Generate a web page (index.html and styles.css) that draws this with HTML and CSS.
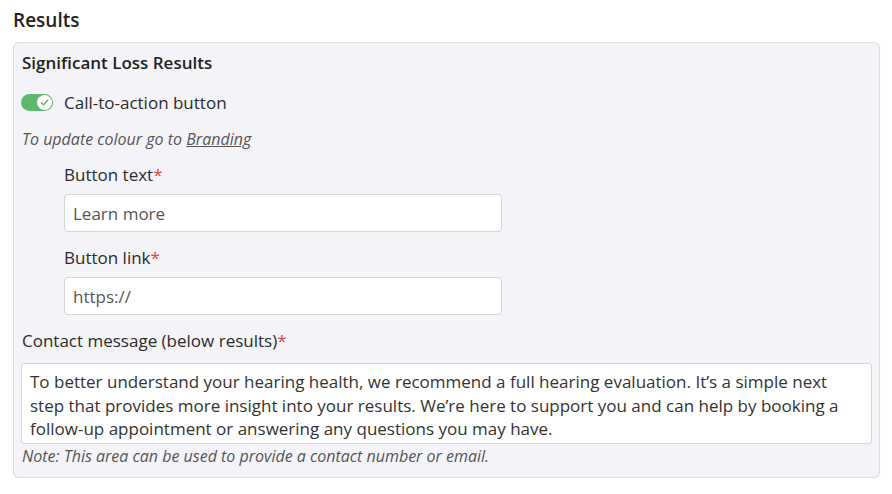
FILE: index.html
```html
<!DOCTYPE html>
<html lang="en">
<head>
<meta charset="utf-8">
<title>Results</title>
<link rel="stylesheet" href="styles.css">
</head>
<body>
<h2 class="section-title">Results</h2>
<div class="panel">
  <h3 class="panel-title">Significant Loss Results</h3>
  <div class="toggle-row">
    <span class="toggle">
      <span class="knob">
        <svg width="11" height="11" viewBox="0 0 12 12"><path d="M2.6 6.3 L5 8.6 L9.4 3.6" fill="none" stroke="#5cb96b" stroke-width="1.6" stroke-linecap="round" stroke-linejoin="round"/></svg>
      </span>
    </span>
    <span class="toggle-label">Call-to-action button</span>
  </div>
  <p class="hint">To update colour go to <a href="#" class="hint-link">Branding</a></p>
  <div class="sub-fields">
    <label class="field-label">Button text<span class="req">*</span></label>
    <input class="text-input" type="text" value="Learn more">
    <label class="field-label second">Button link<span class="req">*</span></label>
    <input class="text-input" type="text" value="https://">
  </div>
  <label class="field-label contact">Contact message (below results)<span class="req">*</span></label>
  <textarea class="message" rows="3">To better understand your hearing health, we recommend a full hearing evaluation. It’s a simple next step that provides more insight into your results. We’re here to support you and can help by booking a follow-up appointment or answering any questions you may have.</textarea>
  <p class="note">Note: This area can be used to provide a contact number or email.</p>
</div>
</body>
</html>
```
FILE: styles.css
```css
* { box-sizing: border-box; }
html, body { background: #ffffff; }
body {
  margin: 0;
  padding: 0 12px 0 13px;
  font-family: "Open Sans", "Noto Sans", sans-serif;
  color: #2b2b2b;
}
.section-title {
  margin: 0;
  padding-top: 8px;
  font-size: 19px;
  line-height: 24px;
  font-weight: 600;
  color: #222;
  height: 42px;
}
.panel {
  width: 867px;
  background: #f4f4f8;
  border: 1px solid #dcdce0;
  border-radius: 6px;
  padding: 10px 7px 11px 7px;
  box-shadow: 0 1px 2px rgba(0,0,0,0.06);
}
.panel-title {
  margin: 0 0 0 1px;
  font-size: 17px;
  line-height: 20px;
  font-weight: 600;
  color: #222;
}
.toggle-row {
  display: flex;
  align-items: center;
  height: 24px;
  margin-top: 17px;
}
.toggle {
  width: 32px;
  height: 17px;
  border-radius: 9px;
  background: #5cb96b;
  display: flex;
  align-items: center;
  justify-content: flex-end;
  padding-right: 1px;
  margin-right: 11px;
}
.knob {
  width: 15px;
  height: 15px;
  border-radius: 50%;
  background: #fff;
  display: flex;
  align-items: center;
  justify-content: center;
}
.toggle-label {
  font-size: 17px;
  color: #2b2b2b;
}
.hint {
  margin: 15px 0 0 1px;
  font-size: 16px;
  line-height: 20px;
  font-style: italic;
  color: #555;
}
.hint-link { color: #555; text-decoration: underline; }
.sub-fields {
  display: flex;
  flex-direction: column;
  align-items: flex-start;
  padding-left: 43px;
  margin-top: 16px;
}
.field-label {
  display: block;
  font-size: 17px;
  line-height: 20px;
  color: #2b2b2b;
}
.req { color: #d9473b; }
.field-label.second { margin-top: 16px; }
.text-input {
  margin-top: 9px;
  width: 438px;
  height: 38px;
  border: 1px solid #d6d6da;
  border-radius: 4px;
  background: #fff;
  padding: 0 8px;
  font-family: inherit;
  font-size: 17px;
  color: #555;
}
.field-label.contact { margin: 16px 0 0 1px; }
.message {
  display: block;
  margin-top: 12px;
  width: 851px;
  height: 81px;
  border: 1px solid #d6d6da;
  border-radius: 3px;
  background: #fff;
  padding: 6px 8px;
  font-family: inherit;
  font-size: 17px;
  line-height: 23.5px;
  color: #333;
  resize: none;
  overflow: hidden;
}
.note {
  margin: 2px 0 0 1px;
  font-size: 16px;
  line-height: 20px;
  font-style: italic;
  color: #555;
}
```
